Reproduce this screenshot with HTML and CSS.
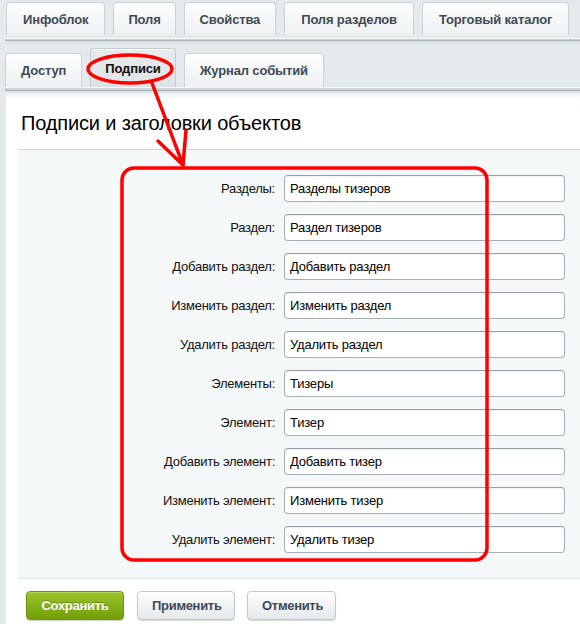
FILE: index.html
```html
<!DOCTYPE html>
<html lang="ru">
<head>
<meta charset="utf-8">
<title>Подписи и заголовки объектов</title>
<link rel="stylesheet" href="styles.css">
</head>
<body>
<div class="page">
  <nav class="tabs tabs-main">
    <a class="tab">Инфоблок</a>
    <a class="tab">Поля</a>
    <a class="tab">Свойства</a>
    <a class="tab">Поля разделов</a>
    <a class="tab">Торговый каталог</a>
  </nav>
  <div class="rule"></div>
  <nav class="tabs tabs-sub">
    <a class="tab">Доступ</a>
    <a class="tab tab-active">Подписи</a>
    <a class="tab">Журнал событий</a>
  </nav>
  <div class="rule rule-bottom"></div>

  <main class="panel">
    <h2 class="panel-title">Подписи и заголовки объектов</h2>
    <form class="form-box">
      <label class="field-label">Разделы:</label><input class="field" value="Разделы тизеров">
      <label class="field-label">Раздел:</label><input class="field" value="Раздел тизеров">
      <label class="field-label">Добавить раздел:</label><input class="field" value="Добавить раздел">
      <label class="field-label">Изменить раздел:</label><input class="field" value="Изменить раздел">
      <label class="field-label">Удалить раздел:</label><input class="field" value="Удалить раздел">
      <label class="field-label">Элементы:</label><input class="field" value="Тизеры">
      <label class="field-label">Элемент:</label><input class="field" value="Тизер">
      <label class="field-label">Добавить элемент:</label><input class="field" value="Добавить тизер">
      <label class="field-label">Изменить элемент:</label><input class="field" value="Изменить тизер">
      <label class="field-label">Удалить элемент:</label><input class="field" value="Удалить тизер">
    </form>
    <div class="actions">
      <button class="btn btn-save">Сохранить</button>
      <button class="btn">Применить</button>
      <button class="btn btn-cancel">Отменить</button>
    </div>
  </main>

  <!-- red callout marks drawn over the page -->
  <svg class="marks" width="580" height="624" viewBox="0 0 580 624">
    <g fill="none" stroke="#ff0000" stroke-width="3.5" stroke-linecap="round" stroke-linejoin="round">
      <ellipse cx="130" cy="69" rx="42" ry="14"/>
      <line x1="152" y1="83" x2="183" y2="165"/>
      <polyline points="158,141 183,165 186,130"/>
      <rect x="122" y="168" width="365" height="392" rx="12" ry="12"/>
    </g>
  </svg>
</div>
</body>
</html>
```

FILE: styles.css
```css
* {
  box-sizing: border-box;
}

html, body {
  margin: 0;
  padding: 0;
}

body {
  width: 580px;
  height: 624px;
  overflow: hidden;
  background: #e4e9eb;
  font-family: Arial, "Liberation Sans", sans-serif;
  font-size: 13px;
  color: #000;
}

.page {
  position: relative;
  width: 580px;
  height: 624px;
}

/* ---------- tabs ---------- */
.tabs {
  display: flex;
  align-items: flex-end;
  gap: 8px;
}

.tabs-main {
  padding: 2px 0 0 6px;
  height: 35px;
}

.tabs-sub {
  padding: 0 0 0 5px;
  height: 44px;
}

.tab {
  display: flex;
  align-items: center;
  justify-content: center;
  height: 33px;
  padding: 0 16px;
  border: 1px solid #cbd1d4;
  border-bottom: none;
  border-radius: 4px 4px 0 0;
  background: linear-gradient(#fdfefe, #eef1f2);
  box-shadow: inset 0 1px 0 #fff;
  font-weight: bold;
  font-size: 13px;
  letter-spacing: -0.15px;
  color: #3e4a54;
  white-space: nowrap;
}

.tabs-main .tab:nth-child(2) { padding: 0 14px; }
.tabs-main .tab:nth-child(3) { padding: 0 15px; }

.tabs-sub .tab {
  height: 34px;
  padding: 0 15px;
}

.tabs-sub .tab-active {
  height: 39px;
  padding: 0 14px;
  background: linear-gradient(#e7ebec, #dde3e5);
  border-color: #c4cacd;
  color: #111;
}

/* ---------- separators ---------- */
.rule {
  height: 5px;
  margin-left: 5px;
  background: linear-gradient(#f6f8f8 0, #f6f8f8 1px, #c9cfd2 1px, #c9cfd2 2px, #a9b0b4 2px, #a9b0b4 3px, #dfe4e6 3px);
  margin-top: 3px;
}

.rule-bottom {
  margin-top: 0;
  height: 7px;
  background: linear-gradient(#f6f8f8 0, #f6f8f8 1px, #cfd5d8 1px, #cfd5d8 3px, #a8afb3 3px, #a8afb3 4px, #d9dfe1 4px, #eef1f2 7px);
}

/* ---------- main panel ---------- */
.panel {
  margin-left: 6px;
  height: 540px;
  background: linear-gradient(#f3f5f6, #fff 6px);
  padding: 17px 0 0 12px;
}

.panel-title {
  margin: 0 0 14px 3px;
  font-size: 20px;
  line-height: 24px;
  font-weight: normal;
  letter-spacing: -0.15px;
  color: #000;
}

.form-box {
  display: grid;
  grid-template-columns: 257px 281px;
  column-gap: 9px;
  row-gap: 12px;
  align-items: center;
  padding: 25px 0 25px 0;
  background: #f5f8f9;
  border-top: 1px solid #cdd4d7;
  border-bottom: 1px solid #dfe6e9;
}

.field-label {
  text-align: right;
  font-size: 13px;
  letter-spacing: -0.25px;
  color: #111;
}

.field {
  width: 281px;
  height: 27px;
  padding: 0 5px;
  border: 1px solid #a7aeb4;
  border-top-color: #989fa6;
  border-radius: 4px;
  background: #fff;
  box-shadow: inset 0 1px 1px rgba(0, 0, 0, 0.06);
  font-family: Arial, "Liberation Sans", sans-serif;
  font-size: 13px;
  letter-spacing: -0.2px;
  color: #000;
}

/* ---------- buttons ---------- */
.actions {
  display: flex;
  gap: 13px;
  padding: 12px 0 0 8px;
}

.btn {
  height: 29px;
  padding: 0 14px;
  border: 1px solid #c1c8cb;
  border-radius: 4px;
  background: linear-gradient(#fdfefe, #e4e9eb);
  box-shadow: 0 1px 1px rgba(0, 0, 0, 0.15), inset 0 1px 0 #fff;
  font-family: Arial, "Liberation Sans", sans-serif;
  font-weight: bold;
  font-size: 13px;
  letter-spacing: -0.3px;
  color: #3e4a54;
}

.btn-save {
  width: 98px;
  border-color: #6f930f;
  background: linear-gradient(#9ac52a, #729e08);
  box-shadow: 0 1px 1px rgba(0, 0, 0, 0.2), inset 0 1px 0 #b5d653;
  color: #fff;
  text-shadow: 0 -1px 0 rgba(0, 0, 0, 0.25);
}

.btn-save + .btn {
  width: 98px;
}

.btn-cancel {
  width: 89px;
  margin-left: -1px;
}

/* ---------- callouts ---------- */
.marks {
  position: absolute;
  left: 0;
  top: 0;
  pointer-events: none;
}
```
